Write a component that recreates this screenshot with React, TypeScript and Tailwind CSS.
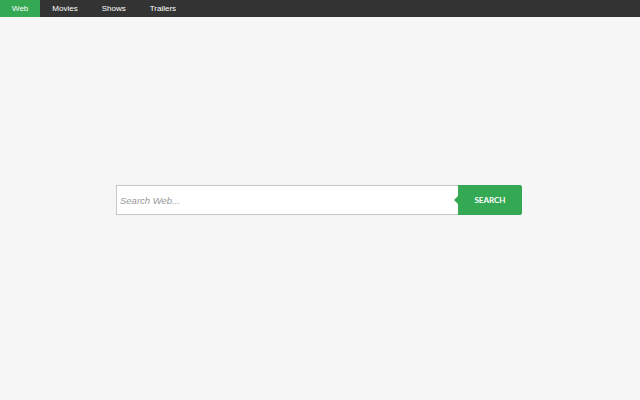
import React, { useState } from "react";

const tabs = ["Web", "Movies", "Shows", "Trailers"];

export default function App() {
  const [active, setActive] = useState("Web");
  const [q, setQ] = useState("");

  return (
    <div className="min-h-screen w-full bg-[#f6f6f6] font-['Liberation_Sans',Arial,sans-serif]">
      {/* top nav */}
      <nav className="flex h-[17px] bg-[#333333]">
        {tabs.map((t) => (
          <button
            key={t}
            onClick={() => setActive(t)}
            className={
              "h-full px-[12px] text-[8px] leading-[17px] text-white " +
              (active === t ? "bg-[#34a853]" : "bg-transparent")
            }
          >
            {t}
          </button>
        ))}
      </nav>

      {/* search */}
      <main className="flex justify-center pt-[168px]">
        <form
          className="mr-[2px] flex h-[30px] w-[406px]"
          onSubmit={(e) => e.preventDefault()}
        >
          <input
            value={q}
            onChange={(e) => setQ(e.target.value)}
            placeholder={"Search " + active + "..."}
            className="h-full flex-1 border border-[#c8c8c8] border-r-0 bg-white px-[3px] text-[9.5px] italic text-[#555] outline-none placeholder:text-[#999]"
          />
          <button
            type="submit"
            className="relative h-full w-[64px] rounded-r-[2px] bg-[#34a853] font-['Lato',sans-serif] text-[8px] font-bold text-white"
          >
            <span className="absolute left-[-4px] top-1/2 h-0 w-0 -translate-y-1/2 border-y-[4px] border-r-[4px] border-y-transparent border-r-[#34a853]" />
            SEARCH
          </button>
        </form>
      </main>
    </div>
  );
}
